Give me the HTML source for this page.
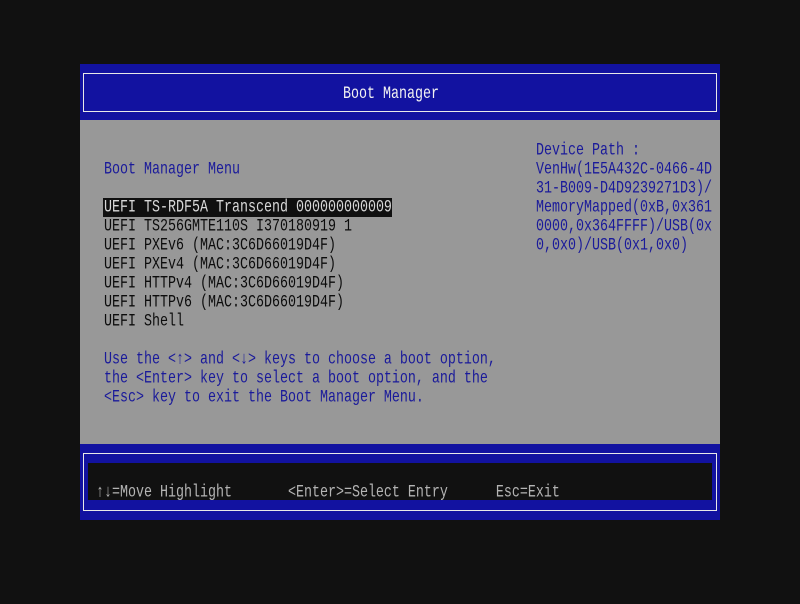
<!DOCTYPE html>
<html><head><meta charset="utf-8"><style>
body{margin:0;width:800px;height:604px;background:#111;position:relative;overflow:hidden;font-family:"Liberation Mono",monospace;}
.a{position:absolute}
.t{position:absolute;font-size:13.33px;line-height:19px;height:19px;white-space:pre;transform:scaleY(1.3);transform-origin:0 50%;margin-top:2px;}
.b{color:#1a1a9a}.k{color:#0c0c0c}
</style></head><body>
<div class="a" style="left:80px;top:64px;width:640px;height:56px;background:#1212a0"></div>
<div class="a" style="left:83px;top:73px;width:632px;height:37px;border:1px solid #e8e8e8"></div>
<div class="t" style="left:343px;top:83px;color:#f2f2f2">Boot Manager</div>
<div class="a" style="left:80px;top:120px;width:640px;height:324px;background:#989898"></div>
<div class="t b" style="left:104px;top:159px">Boot Manager Menu</div>
<div class="a" style="left:103px;top:198px;width:289px;height:19px;background:#101010"></div>
<div class="t" style="left:104px;top:197px;color:#d8d8d8">UEFI TS-RDF5A Transcend 000000000009</div>
<div class="t k" style="left:104px;top:216px">UEFI TS256GMTE110S I370180919 1</div>
<div class="t k" style="left:104px;top:235px">UEFI PXEv6 (MAC:3C6D66019D4F)</div>
<div class="t k" style="left:104px;top:254px">UEFI PXEv4 (MAC:3C6D66019D4F)</div>
<div class="t k" style="left:104px;top:273px">UEFI HTTPv4 (MAC:3C6D66019D4F)</div>
<div class="t k" style="left:104px;top:292px">UEFI HTTPv6 (MAC:3C6D66019D4F)</div>
<div class="t k" style="left:104px;top:311px">UEFI Shell</div>
<div class="t b" style="left:104px;top:349px">Use the &lt;↑&gt; and &lt;↓&gt; keys to choose a boot option,</div>
<div class="t b" style="left:104px;top:368px">the &lt;Enter&gt; key to select a boot option, and the</div>
<div class="t b" style="left:104px;top:387px">&lt;Esc&gt; key to exit the Boot Manager Menu.</div>
<div class="t b" style="left:536px;top:140px">Device Path :</div>
<div class="t b" style="left:536px;top:159px">VenHw(1E5A432C-0466-4D</div>
<div class="t b" style="left:536px;top:178px">31-B009-D4D9239271D3)/</div>
<div class="t b" style="left:536px;top:197px">MemoryMapped(0xB,0x361</div>
<div class="t b" style="left:536px;top:216px">0000,0x364FFFF)/USB(0x</div>
<div class="t b" style="left:536px;top:235px">0,0x0)/USB(0x1,0x0)</div>
<div class="a" style="left:80px;top:444px;width:640px;height:76px;background:#1212a0"></div>
<div class="a" style="left:83px;top:453px;width:632px;height:56px;border:1px solid #e8e8e8"></div>
<div class="a" style="left:88px;top:463px;width:624px;height:37px;background:#111"></div>
<div class="t" style="left:96px;top:482px;color:#b4b4b4">↑↓=Move Highlight       &lt;Enter&gt;=Select Entry      Esc=Exit</div>
</body></html>
